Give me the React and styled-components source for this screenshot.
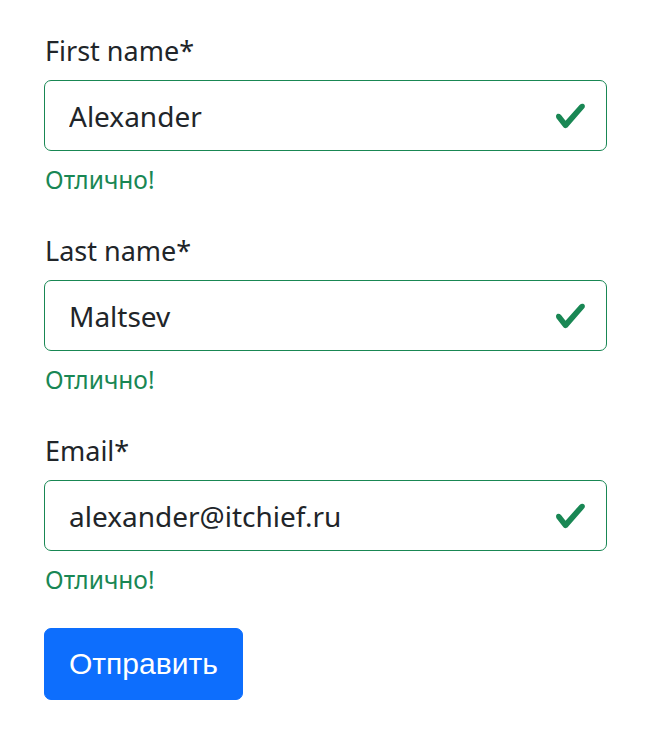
import React from 'react';
import styled, { createGlobalStyle } from 'styled-components';

const GlobalStyle = createGlobalStyle`
  body {
    margin: 0;
    background: #fff;
    color: #212529;
    font-family: "Noto Sans", "Open Sans", sans-serif;
  }
`;

const Form = styled('form')`
  width: 563px;
  padding: 28px 0 0 44px;
  display: flex;
  flex-direction: column;
  gap: 30px;
`;

const Field = styled('div')`
  display: flex;
  flex-direction: column;
`;

const Label = styled('label')`
  font-size: 27px;
  line-height: 45px;
  margin-bottom: 7px;
  padding-left: 1px;
`;

const InputWrap = styled('div')`
  position: relative;
`;

const Input = styled('input')`
  box-sizing: border-box;
  width: 100%;
  height: 71px;
  padding: 0 70px 0 24px;
  font-family: inherit;
  font-size: 28px;
  color: #212529;
  border: 1px solid #198754;
  border-radius: 7px;
  background: #fff;
  outline: none;
`;

const Check = styled('svg')`
  position: absolute;
  right: 20px;
  top: 50%;
  width: 33px;
  height: 33px;
  transform: translateY(-50%);
  pointer-events: none;
`;

const Feedback = styled('div')`
  margin-top: 11px;
  font-size: 24.5px;
  line-height: 36px;
  color: #198754;
  padding-left: 1px;
`;

const Submit = styled('button')`
  align-self: flex-start;
  height: 72px;
  padding: 0 24px;
  font-family: "Liberation Sans", Arial, sans-serif;
  font-size: 30px;
  color: #fff;
  background: #0d6efd;
  border: 1px solid #0d6efd;
  border-radius: 7px;
`;

const fields = [
  { id: 'first', label: 'First name*', value: 'Alexander' },
  { id: 'last', label: 'Last name*', value: 'Maltsev' },
  { id: 'email', label: 'Email*', value: 'alexander@itchief.ru' }
];

const CheckIcon = () => (
  <Check viewBox="0 0 8 8">
    <path
      fill="#198754"
      d="M2.3 6.73.6 4.53c-.4-1.04.46-1.4 1.1-.8l1.1 1.4 3.4-3.8c.6-.63 1.6-.27 1.2.7l-4 4.6c-.43.5-.8.4-1.1.1z"
    />
  </Check>
);

export default function App() {
  return (
    <>
      <GlobalStyle />
      <Form onSubmit={e => e.preventDefault()}>
        {fields.map(f => (
          <Field key={f.id}>
            <Label htmlFor={f.id}>{f.label}</Label>
            <InputWrap>
              <Input id={f.id} defaultValue={f.value} />
              <CheckIcon />
            </InputWrap>
            <Feedback>Отлично!</Feedback>
          </Field>
        ))}
        <Submit type="submit">Отправить</Submit>
      </Form>
    </>
  );
}
